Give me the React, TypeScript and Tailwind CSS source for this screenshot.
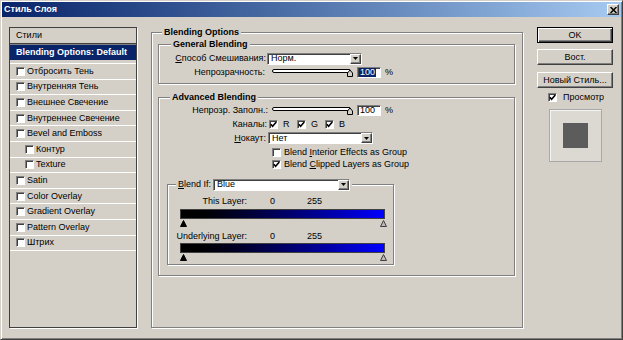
import React from "react";

const sunken =
  "bg-white border border-t-[#808080] border-l-[#808080] border-r-white border-b-white shadow-[inset_1px_1px_0_#404040]";
const raised =
  "bg-[#d4d0c8] border border-t-white border-l-white border-r-[#404040] border-b-[#404040] shadow-[inset_-1px_-1px_0_#808080]";
const etched = "border border-[#808080] shadow-[inset_1px_1px_0_#fff,1px_1px_0_#fff]";

function Check({ checked = false }: { checked?: boolean }) {
  return (
    <span className={`w-[9px] h-[9px] shrink-0 flex items-center justify-center ${sunken}`}>
      {checked && (
        <svg width="7" height="7" viewBox="0 0 7 7">
          <path d="M0.8 3.2 L2.6 5.2 L6.3 1" stroke="#000" strokeWidth="1.6" fill="none" />
        </svg>
      )}
    </span>
  );
}

function Select({ value, width }: { value: string; width: string }) {
  return (
    <div className={`${width} h-[12px] flex items-center ${sunken}`}>
      <span className="flex-1 pl-[3px] leading-none">{value}</span>
      <span className={`w-[11px] h-full flex items-center justify-center ${raised}`}>
        <svg width="5" height="3" viewBox="0 0 5 3">
          <path d="M0 0 H5 L2.5 3 Z" fill="#000" />
        </svg>
      </span>
    </div>
  );
}

function Slider() {
  return (
    <svg width="82" height="12" viewBox="0 0 82 12" className="shrink-0">
      <rect x="0.5" y="3.5" width="78" height="3" rx="1.5" fill="#fff" stroke="#000" />
      <path d="M75.5 10.5 V7 L78 4 L80.5 7 V10.5 Z" fill="#d4d0c8" stroke="#000" />
    </svg>
  );
}

function Legend({ children, className = "" }: { children: React.ReactNode; className?: string }) {
  return (
    <div className={`-mt-[6px] w-fit bg-[#d4d0c8] px-[2px] font-bold leading-[11px] ${className}`}>
      {children}
    </div>
  );
}

function Triangles() {
  return (
    <svg width="208" height="7" viewBox="0 0 208 7" className="ml-[12px]">
      <path d="M0.5 6.5 L3.5 0.5 L6.5 6.5 Z" fill="#000" stroke="#000" />
      <path d="M200.5 6.5 L203.5 0.5 L206.5 6.5 Z" fill="#b8b8b8" stroke="#404040" />
    </svg>
  );
}

const styles: [string, number][] = [
  ["Отбросить Тень", 0],
  ["Внутренняя Тень", 0],
  ["Внешнее Свечение", 0],
  ["Внутреннее Свечение", 0],
  ["Bevel and Emboss", 0],
  ["Контур", 1],
  ["Texture", 1],
  ["Satin", 0],
  ["Color Overlay", 0],
  ["Gradient Overlay", 0],
  ["Pattern Overlay", 0],
  ["Штрих", 0],
];

function StylesList() {
  return (
    <div className="mt-[10px] w-[128px] h-[301px] shrink-0 border border-[#404040] shadow-[1px_1px_0_#fff] flex flex-col">
      <div className="h-[16px] pl-[6px] flex items-center border-b border-[#404040] shadow-[0_1px_0_#808080]">
        Стили
      </div>
      <div className="mt-[1px] h-[15px] pl-[6px] flex items-center bg-[#0a246a] text-white font-bold">
        Blending Options: Default
      </div>
      <div className="mt-[3px] flex flex-col">
        {styles.map(([name, level]) => (
          <div
            key={name}
            className={`h-[15.6px] border-t border-white flex items-center ${level ? "pl-[15px]" : "pl-[6px]"}`}
          >
            <Check />
            <span className="ml-[2px]">{name}</span>
          </div>
        ))}
        <div className="border-t border-white" />
      </div>
    </div>
  );
}

function LayerRow({ label }: { label: string }) {
  return (
    <div className="h-[11px] flex items-center whitespace-nowrap">
      <span className="ml-[10px] w-[69px] flex justify-end">{label}</span>
      <span className="ml-[23px] w-[37px]">0</span>
      <span>255</span>
    </div>
  );
}

function Blending() {
  return (
    <div className={`ml-[14px] mt-[15px] w-[372px] h-[296px] shrink-0 flex flex-col items-start ${etched}`}>
      <Legend className="ml-[10px]">Blending Options</Legend>

      {/* General Blending */}
      <div className={`ml-[6px] mt-[6px] w-[357px] h-[40px] flex flex-col items-start ${etched}`}>
        <Legend className="ml-[12px]">General Blending</Legend>
        <div className="mt-[2px] h-[13px] flex items-center">
          <span className="w-[107px] text-right">
            <u>С</u>пособ Смешивания:
          </span>
          <div className="ml-[1px]">
            <Select value="Норм." width="w-[95px]" />
          </div>
        </div>
        <div className="mt-[1px] h-[12px] flex items-center">
          <span className="w-[106px] text-right">Непрозрачность:</span>
          <div className="ml-[7px] flex">
            <Slider />
          </div>
          <div className={`ml-[3px] w-[24px] h-[11px] flex items-center pl-[1px] ${sunken}`}>
            <span className="bg-[#0a246a] text-white leading-[9px] px-[1px]">100</span>
          </div>
          <span className="ml-[4px]">%</span>
        </div>
      </div>

      {/* Advanced Blending */}
      <div className={`ml-[6px] mt-[13px] w-[357px] h-[179px] flex flex-col items-start ${etched}`}>
        <Legend className="ml-[11px]">Advanced Blending</Legend>
        <div className="mt-[1px] h-[12px] flex items-center">
          <span className="w-[109px] text-right">Непрозр. Заполн.:</span>
          <div className="ml-[4px] flex">
            <Slider />
          </div>
          <div className={`ml-[3px] w-[24px] h-[11px] flex items-center pl-[2px] ${sunken}`}>
            <span className="leading-[9px]">100</span>
          </div>
          <span className="ml-[4px]">%</span>
        </div>
        <div className="mt-[2px] h-[12px] flex items-center">
          <span className="w-[108px] text-right">Каналы:</span>
          <div className="ml-[2px] flex">
            {["R", "G", "B"].map((c) => (
              <div key={c} className="w-[28px] flex items-center">
                <Check checked />
                <span className="ml-[5px]">{c}</span>
              </div>
            ))}
          </div>
        </div>
        <div className="mt-[2px] h-[12px] flex items-center">
          <span className="w-[107px] text-right">
            <u>Н</u>окаут:
          </span>
          <div className="ml-[2px]">
            <Select value="Нет" width="w-[105px]" />
          </div>
        </div>
        <div className="mt-[2px] h-[12px] ml-[113px] flex items-center">
          <Check />
          <span className="ml-[3px]">
            Blend <u>I</u>nterior Effects as Group
          </span>
        </div>
        <div className="h-[12px] ml-[113px] flex items-center">
          <Check checked />
          <span className="ml-[3px]">
            Blend <u>C</u>lipped Layers as Group
          </span>
        </div>

        {/* Blend If */}
        <div className={`ml-[8px] mt-[14px] w-[227px] h-[81px] flex flex-col items-start ${etched}`}>
          <div className="-mt-[7px] ml-[8px] h-[13px] px-[2px] bg-[#d4d0c8] flex items-center whitespace-nowrap">
            <span className="w-[35px]">
              <u>B</u>lend If:
            </span>
            <Select value="Blue" width="w-[137px]" />
          </div>
          <div className="mt-[5px]">
            <LayerRow label="This Layer:" />
          </div>
          <div className="mt-[2px] ml-[12px] w-[205px] h-[10px] border border-[#404040] bg-linear-to-r from-black to-[#0000ff]" />
          <div className="mt-[1px] h-[7px] flex">
            <Triangles />
          </div>
          <div className="mt-[4px]">
            <LayerRow label="Underlying Layer:" />
          </div>
          <div className="mt-[1px] ml-[12px] w-[205px] h-[10px] border border-[#404040] bg-linear-to-r from-black to-[#0000ff]" />
          <div className="mt-[1px] h-[7px] flex">
            <Triangles />
          </div>
        </div>
      </div>
    </div>
  );
}

function RightColumn() {
  return (
    <div className="ml-[14px] mt-[10px] w-[76px] shrink-0 flex flex-col">
      <button className="h-[16px] w-full border border-black bg-[#d4d0c8] shadow-[inset_1px_1px_0_#fff,inset_-1px_-1px_0_#404040,inset_-2px_-2px_0_#808080] flex items-center justify-center">
        OK
      </button>
      <button className={`mt-[6px] h-[16px] w-full flex items-center justify-center ${raised}`}>
        Вост.
      </button>
      <button className={`mt-[7px] h-[16px] w-full flex items-center justify-center ${raised}`}>
        Новый Стиль...
      </button>
      <div className="mt-[4px] h-[11px] ml-[11px] flex items-center">
        <Check checked />
        <span className="ml-[6px]">Просмотр</span>
      </div>
      <div className="mt-[6px] ml-[12px] w-[53px] h-[53px] border border-[#a8a8a8] shadow-[inset_1px_1px_0_#f4f4f4] bg-[#dcd9d3] flex items-center justify-center">
        <div className="w-[25px] h-[25px] bg-[#5c5c5c]" />
      </div>
    </div>
  );
}

export default function App() {
  return (
    <div className="w-[623px] h-[340px] overflow-hidden bg-[#d4d0c8] font-['Liberation_Sans',Arial,sans-serif] text-[9px] leading-[11px] text-black border border-t-[#d4d0c8] border-l-[#d4d0c8] border-r-[#404040] border-b-[#404040] shadow-[inset_1px_1px_0_#fff,inset_-1px_-1px_0_#808080] flex flex-col">
      {/* Title bar */}
      <div className="mx-[1px] mt-[1px] h-[15px] shrink-0 flex items-center justify-between pl-[2px] pr-[2px] bg-linear-to-r from-[#0a246a] to-[#a6caf0]">
        <span className="text-white font-bold">Стиль Слоя</span>
        <span className={`w-[12px] h-[11px] flex items-center justify-center ${raised}`}>
          <svg width="7" height="6" viewBox="0 0 7 6">
            <path d="M0.5 0 L6.5 6 M6.5 0 L0.5 6" stroke="#000" strokeWidth="1.5" />
          </svg>
        </span>
      </div>

      <div className="flex items-start pl-[8px]">
        <StylesList />
        <Blending />
        <RightColumn />
      </div>
    </div>
  );
}
